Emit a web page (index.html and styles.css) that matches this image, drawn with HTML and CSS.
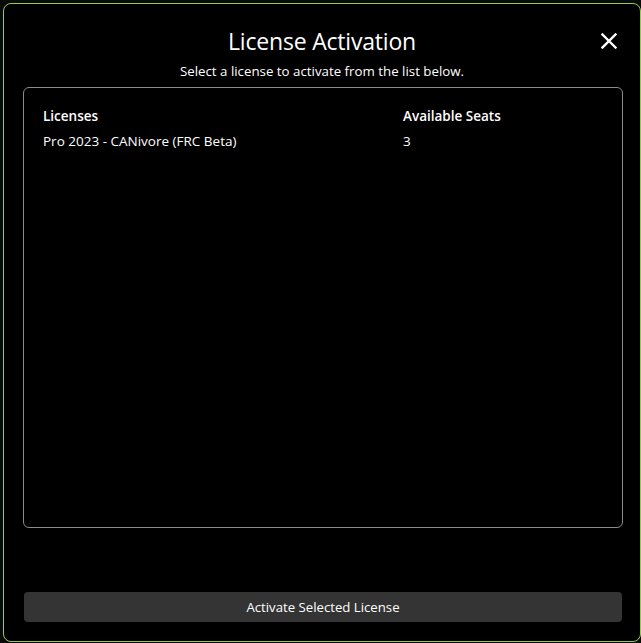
FILE: index.html
```html
<!DOCTYPE html>
<html>
<head>
<meta charset="utf-8">
<link rel="stylesheet" href="styles.css">
</head>
<body>
<div class="window">
  <div class="header">
    <div class="spacer"></div>
    <h1 class="title">License Activation</h1>
    <div class="close-wrap">
      <svg class="close" width="16" height="16" viewBox="0 0 16 16"><path d="M1.5 1.5 L14.5 14.5 M14.5 1.5 L1.5 14.5" stroke="#fff" stroke-width="2.4" stroke-linecap="square"/></svg>
    </div>
  </div>
  <p class="subtitle">Select a license to activate from the list below.</p>
  <div class="panel">
    <div class="table">
      <div class="th">Licenses</div>
      <div class="th">Available Seats</div>
      <div class="td">Pro 2023 - CANivore (FRC Beta)</div>
      <div class="td">3</div>
    </div>
  </div>
  <button class="activate">Activate Selected License</button>
</div>
</body>
</html>
```

FILE: styles.css
```css
html, body {
  margin: 0;
  padding: 0;
  background: #0a0a0a;
  width: 641px;
  height: 643px;
  overflow: hidden;
}
body {
  font-family: "Open Sans", "Noto Sans", sans-serif;
  color: #fff;
}
.window {
  box-sizing: border-box;
  margin: 3px 0 0 3px;
  width: 638px;
  height: 639px;
  border: 1px solid #96cc48;
  border-radius: 8px;
  background: #000;
  display: flex;
  flex-direction: column;
}
.header {
  display: grid;
  grid-template-columns: 1fr auto 1fr;
  align-items: center;
  margin-top: 22px;
  height: 30px;
}
.title {
  margin: 0;
  font-weight: 400;
  font-size: 23px;
  line-height: 30px;
  letter-spacing: -0.2px;
}
.close-wrap {
  justify-self: end;
  margin-right: 23px;
  display: flex;
}
.subtitle {
  margin: 6px 0 0 0;
  text-align: center;
  font-size: 13.3px;
  line-height: 18px;
}
.panel {
  box-sizing: border-box;
  margin: 7px 0 0 19px;
  width: 600px;
  height: 441px;
  border: 1px solid #8a8a8a;
  border-radius: 6px;
  padding: 19px 19px;
}
.table {
  display: grid;
  grid-template-columns: 360px 1fr;
  row-gap: 7px;
  font-size: 13.5px;
  line-height: 18px;
}
.th {
  font-weight: 600;
}
.activate {
  margin: 64px 0 0 20px;
  width: 598px;
  height: 30px;
  border: none;
  border-radius: 4px;
  background: #343434;
  color: #fff;
  font-family: "Open Sans", "Noto Sans", sans-serif;
  font-size: 13.2px;
  padding: 0;
}
```
